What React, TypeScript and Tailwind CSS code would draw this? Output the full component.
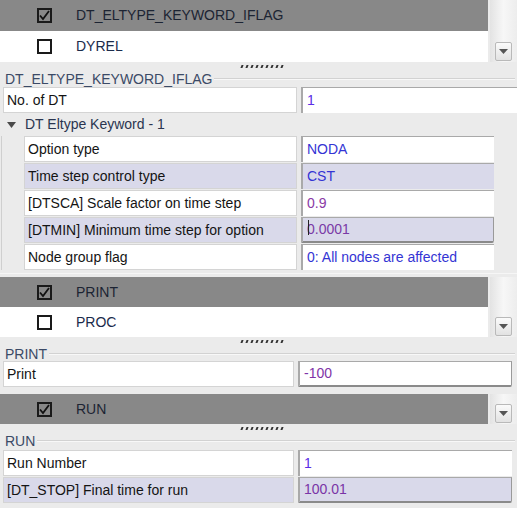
import React from 'react';

type ListItem = { label: string; checked: boolean; selected?: boolean };

const font = { fontFamily: '"Liberation Sans", Arial, sans-serif' };

const CheckBox: React.FC<{ checked: boolean }> = ({ checked }) => (
  <span className="w-[15px] h-[15px] border-2 border-[#1a1a1a] bg-transparent flex items-center justify-center">
    {checked && (
      <svg width="11" height="11" viewBox="0 0 11 11">
        <path d="M1 5.5 L4 9 L10 1" fill="none" stroke="#111" strokeWidth="1.8" />
      </svg>
    )}
  </span>
);

const DownArrow: React.FC = () => (
  <div className="w-[17px] h-[19px] border border-[#b9b9b9] rounded-[2px] bg-gradient-to-b from-[#fbfbfb] to-[#e2e2e2] flex items-center justify-center">
    <svg width="9" height="5" viewBox="0 0 9 5">
      <path d="M0 0 H9 L4.5 5 Z" fill="#555" />
    </svg>
  </div>
);

const KeywordList: React.FC<{ items: ListItem[]; rowH: string }> = ({ items, rowH }) => (
  <div className="flex">
    <div className="flex-1 flex flex-col">
      {items.map((it) => (
        <div
          key={it.label}
          className={`${rowH} flex items-center pl-[37px] gap-[24px] text-[14px] ${
            it.selected ? 'bg-[#888888] text-[#1c2433]' : 'bg-white text-[#1b2b4b]'
          }`}
        >
          <CheckBox checked={it.checked} />
          <span>{it.label}</span>
        </div>
      ))}
    </div>
    <div className="w-[27px] ml-[2px] bg-gradient-to-r from-[#e3e3e3] via-[#f7f7f7] to-[#ededed] flex flex-col justify-end items-center pb-[1px]">
      <DownArrow />
    </div>
  </div>
);

const Dots: React.FC = () => (
  <div className="h-[9px] flex items-center justify-center pl-[6px]">
    <div className="flex gap-[3px]">
      {Array.from({ length: 9 }).map((_, i) => (
        <span key={i} className="w-[2px] h-[3px] bg-[#333] skew-x-[-20deg]" />
      ))}
    </div>
  </div>
);

const SectionHeader: React.FC<{ title: string }> = ({ title }) => (
  <div className="h-[15px] flex items-center pl-[5px] pr-[2px] gap-[2px]">
    <span className="text-[14px] leading-none text-[#3b4a66]">{title}</span>
    <div className="flex-1 flex flex-col">
      <div className="h-px bg-[#d2d2d2]" />
      <div className="h-px bg-[#f8f8f8]" />
    </div>
  </div>
);

const FieldRow: React.FC<{
  label: string;
  value: string;
  shaded?: boolean;
  valueColor?: string;
  valueW: string;
  raised?: boolean;
  cursor?: boolean;
}> = ({ label, value, shaded, valueColor = 'text-[#3434d4]', valueW, raised, cursor }) => {
  const bg = shaded ? 'bg-[#d9d9ea]' : 'bg-white';
  return (
    <div className="h-[26px] flex gap-[4px] text-[14px]">
      <div className={`flex-1 ${bg} border border-[#d4d4d4] flex items-center pl-[3px] text-[#141414]`}>{label}</div>
      <div
        className={`${valueW} ${bg} border-l-2 border-t border-[#a9a9a9] flex items-center pl-[4px] ${valueColor} ${
          raised ? 'border-r border-b-2 border-r-[#9a9a9a] border-b-[#8a8a8a] rounded-br-[2px]' : ''
        }`}
      >
        <span className="relative">
          {cursor && <span className="absolute left-[1px] top-[1px] w-px h-[15px] bg-[#222]" />}
          {value}
        </span>
      </div>
    </div>
  );
};

export default function App() {
  return (
    <div className="w-[517px] h-[508px] bg-[#ebebeb] overflow-hidden" style={font}>
      <KeywordList
        rowH="h-[31px]"
        items={[
          { label: 'DT_ELTYPE_KEYWORD_IFLAG', checked: true, selected: true },
          { label: 'DYREL', checked: false },
        ]}
      />
      <Dots />
      <SectionHeader title="DT_ELTYPE_KEYWORD_IFLAG" />
      <div className="pl-[3px] pt-[1px]">
        <FieldRow label="No. of DT" value="1" valueW="w-[216px]" valueColor="text-[#5a2ee6]" />
      </div>
      <div className="h-[23px] flex items-center pl-[7px] gap-[9px] text-[14px] text-[#2a3550]">
        <svg width="9" height="6" viewBox="0 0 9 6">
          <path d="M0 0 H9 L4.5 6 Z" fill="#4a4a4a" />
        </svg>
        <span>DT Eltype Keyword - 1</span>
      </div>
      <div className="pl-[22px] pr-[23px] flex flex-col gap-[1px] border-l border-[#cfcfcf] ml-[1px]">
        <FieldRow label="Option type" value="NODA" valueW="w-[193px]" />
        <FieldRow label="Time step control type" value="CST" shaded valueW="w-[193px]" />
        <FieldRow label="[DTSCA] Scale factor on time step" value="0.9" valueW="w-[193px]" valueColor="text-[#8a3aa6]" />
        <FieldRow
          label="[DTMIN] Minimum time step for option"
          value="0.0001"
          shaded
          raised
          cursor
          valueW="w-[193px]"
          valueColor="text-[#7a3aa6]"
        />
        <FieldRow label="Node group flag" value="0: All nodes are affected" valueW="w-[193px]" />
      </div>
      <div className="h-[7px] flex flex-col justify-center">
        <div className="h-px bg-[#f6f6f6]" />
      </div>
      <KeywordList
        rowH="h-[30px]"
        items={[
          { label: 'PRINT', checked: true, selected: true },
          { label: 'PROC', checked: false },
        ]}
      />
      <Dots />
      <SectionHeader title="PRINT" />
      <div className="pl-[3px] pr-[5px]">
        <FieldRow label="Print" value="-100" valueW="w-[214px]" raised valueColor="text-[#8034a8]" />
      </div>
      <div className="h-[7px]" />
      <KeywordList rowH="h-[30px]" items={[{ label: 'RUN', checked: true, selected: true }]} />
      <Dots />
      <SectionHeader title="RUN" />
      <div className="pl-[3px] pr-[5px] pt-[2px] flex flex-col gap-[1px]">
        <FieldRow label="Run Number" value="1" valueW="w-[214px]" valueColor="text-[#5a2ee6]" />
        <FieldRow label="[DT_STOP] Final time for run" value="100.01" shaded raised valueW="w-[214px]" valueColor="text-[#7a34a6]" />
      </div>
    </div>
  );
}
